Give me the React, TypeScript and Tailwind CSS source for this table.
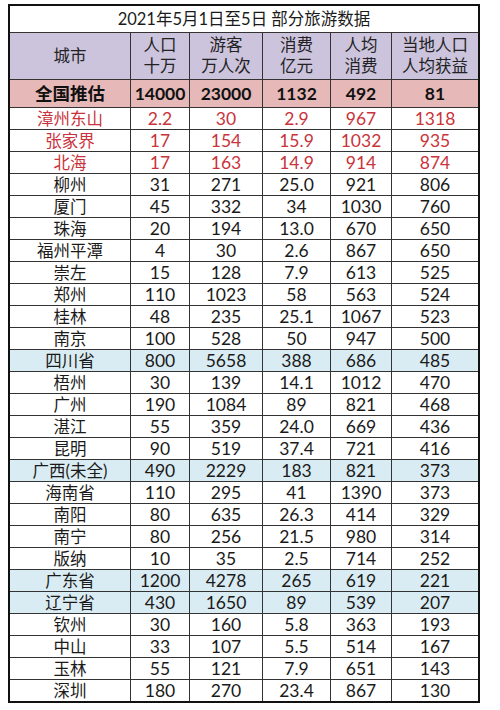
import React from "react";

type Row = { c: string; v: string[]; t?: "red" | "blue" };

const rows: Row[] = [
  { c: "漳州东山", v: ["2.2", "30", "2.9", "967", "1318"], t: "red" },
  { c: "张家界", v: ["17", "154", "15.9", "1032", "935"], t: "red" },
  { c: "北海", v: ["17", "163", "14.9", "914", "874"], t: "red" },
  { c: "柳州", v: ["31", "271", "25.0", "921", "806"] },
  { c: "厦门", v: ["45", "332", "34", "1030", "760"] },
  { c: "珠海", v: ["20", "194", "13.0", "670", "650"] },
  { c: "福州平潭", v: ["4", "30", "2.6", "867", "650"] },
  { c: "崇左", v: ["15", "128", "7.9", "613", "525"] },
  { c: "郑州", v: ["110", "1023", "58", "563", "524"] },
  { c: "桂林", v: ["48", "235", "25.1", "1067", "523"] },
  { c: "南京", v: ["100", "528", "50", "947", "500"] },
  { c: "四川省", v: ["800", "5658", "388", "686", "485"], t: "blue" },
  { c: "梧州", v: ["30", "139", "14.1", "1012", "470"] },
  { c: "广州", v: ["190", "1084", "89", "821", "468"] },
  { c: "湛江", v: ["55", "359", "24.0", "669", "436"] },
  { c: "昆明", v: ["90", "519", "37.4", "721", "416"] },
  { c: "广西(未全)", v: ["490", "2229", "183", "821", "373"], t: "blue" },
  { c: "海南省", v: ["110", "295", "41", "1390", "373"] },
  { c: "南阳", v: ["80", "635", "26.3", "414", "329"] },
  { c: "南宁", v: ["80", "256", "21.5", "980", "314"] },
  { c: "版纳", v: ["10", "35", "2.5", "714", "252"] },
  { c: "广东省", v: ["1200", "4278", "265", "619", "221"], t: "blue" },
  { c: "辽宁省", v: ["430", "1650", "89", "539", "207"], t: "blue" },
  { c: "钦州", v: ["30", "160", "5.8", "363", "193"] },
  { c: "中山", v: ["33", "107", "5.5", "514", "167"] },
  { c: "玉林", v: ["55", "121", "7.9", "651", "143"] },
  { c: "深圳", v: ["180", "270", "23.4", "867", "130"] },
];

const widths = ["w-[121px]", "w-[59px]", "w-[73px]", "w-[68px]", "w-[61px]", "w-[86px]"];

export default function App() {
  return (
    <div
      className="w-[500px] h-[710px] bg-white overflow-hidden"
      style={{ fontFamily: 'Lato, "Noto Sans CJK SC", sans-serif' }}
    >
      <div className="ml-[8px] mt-[4px] w-[472px] border-2 border-[#111] flex flex-col text-[#1a1a1a]">
        <div className="h-[27px] border-b border-[#333] flex items-center justify-center text-[16.5px] leading-[20px]">
          2021年5月1日至5日 部分旅游数据
        </div>
        <div className="h-[47px] border-b border-[#333] flex bg-[#ccc3dc] text-[16.5px] leading-[21px] text-[#222]">
          <div className={`${widths[0]} border-r border-[#333] flex items-center justify-center`}>城市</div>
          <div className={`${widths[1]} border-r border-[#333] flex flex-col items-center justify-center`}>
            <span>人口</span>
            <span>十万</span>
          </div>
          <div className={`${widths[2]} border-r border-[#333] flex flex-col items-center justify-center`}>
            <span>游客</span>
            <span>万人次</span>
          </div>
          <div className={`${widths[3]} border-r border-[#333] flex flex-col items-center justify-center`}>
            <span>消费</span>
            <span>亿元</span>
          </div>
          <div className={`${widths[4]} border-r border-[#333] flex flex-col items-center justify-center`}>
            <span>人均</span>
            <span>消费</span>
          </div>
          <div className={`${widths[5]} flex flex-col items-center justify-center`}>
            <span>当地人口</span>
            <span>人均获益</span>
          </div>
        </div>
        <div className="h-[28px] border-b border-[#333] flex bg-[#e6b9b8] text-[17.5px] leading-[20px] font-bold text-[#111]">
          {["全国推估", "14000", "23000", "1132", "492", "81"].map((t, i) => (
            <div
              key={i}
              className={`${widths[i]} ${i < 5 ? "border-r border-[#333]" : ""} flex items-center justify-center`}
            >
              {t}
            </div>
          ))}
        </div>
        {rows.map((r, ri) => {
          const last = ri === rows.length - 1;
          const bg = r.t === "blue" ? "bg-[#daecf3]" : "bg-white";
          const color = r.t === "red" ? "text-[#c9333b]" : "text-[#1a1a1a]";
          const cells = [r.c, ...r.v];
          return (
            <div
              key={ri}
              className={`${last ? "h-[21px]" : "h-[22px] border-b border-[#333]"} flex ${bg} ${color} text-[17.5px] leading-[20px]`}
            >
              {cells.map((t, i) => (
                <div
                  key={i}
                  className={`${widths[i]} ${i < 5 ? "border-r border-[#333]" : ""} flex items-center justify-center ${i === 0 ? "text-[16.5px]" : ""}`}
                >
                  {t}
                </div>
              ))}
            </div>
          );
        })}
      </div>
    </div>
  );
}
